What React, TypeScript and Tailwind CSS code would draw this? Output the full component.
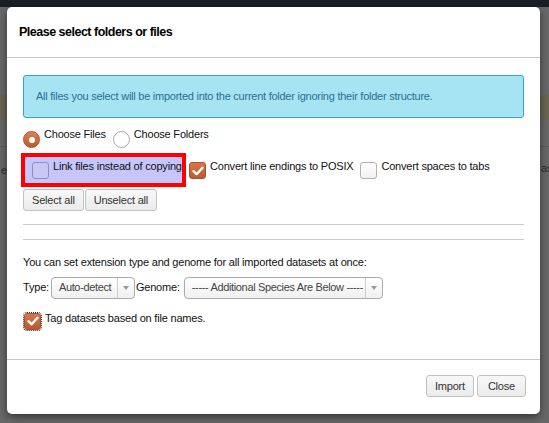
import { FunctionComponent, ReactNode } from "react";

const Check = () => (
  <svg width="12" height="10" viewBox="0 0 12 10">
    <path d="M1.5 5.2 L4.6 8.2 L10.5 1.8" fill="none" stroke="#fff" strokeWidth="2.4" strokeLinecap="round" strokeLinejoin="round" />
  </svg>
);

const Box: FunctionComponent<{ checked?: boolean; tinted?: boolean; dotted?: boolean }> = ({ checked, tinted, dotted }) =>
  checked ? (
    <span
      className={
        "flex shrink-0 items-center justify-center w-[17px] h-[17px] rounded-[3px] border border-[#a8532d] bg-gradient-to-b from-[#d9774b] to-[#b85a32] " +
        (dotted ? "outline outline-1 outline-dotted outline-[#333]" : "")
      }
    >
      <Check />
    </span>
  ) : (
    <span
      className={
        "block shrink-0 w-[17px] h-[17px] rounded-[3px] border " +
        (tinted ? "border-[#8f8fb8] bg-[#c8c8f6]" : "border-[#b3b3b3] bg-gradient-to-b from-white to-[#f1f1f1]")
      }
    />
  );

const Radio: FunctionComponent<{ checked?: boolean }> = ({ checked }) =>
  checked ? (
    <span className="flex shrink-0 items-center justify-center w-[17px] h-[17px] rounded-full border border-[#a8532d] bg-gradient-to-b from-[#e0814f] to-[#b85a32]">
      <span className="block w-[6px] h-[6px] rounded-full bg-white" />
    </span>
  ) : (
    <span className="block shrink-0 w-[17px] h-[17px] rounded-full border border-[#a6a6a6] bg-white" />
  );

const Btn: FunctionComponent<{ children: ReactNode; className?: string }> = ({ children, className }) => (
  <button
    className={
      "h-[22px] rounded-[3px] border border-[#c2c2c2] bg-gradient-to-b from-[#f8f8f8] to-[#ebebeb] text-[11px] tracking-[-0.2px] text-[#333] leading-none " +
      (className || "px-[8px]")
    }
  >
    {children}
  </button>
);

const Select: FunctionComponent<{ label: string; width: string }> = ({ label, width }) => (
  <div className={"flex shrink-0 h-[22px] rounded-[4px] border border-[#aaa] bg-gradient-to-b from-white to-[#f0f0f0] " + width}>
    <div className="flex-1 min-w-0 overflow-hidden flex items-center pl-[7px] text-[11px] tracking-[-0.35px] text-[#444] whitespace-nowrap">{label}</div>
    <div className="w-[17px] shrink-0 border-l border-[#ccc] flex items-center justify-center">
      <span className="block w-0 h-0 border-l-[3px] border-r-[3px] border-t-[4px] border-l-transparent border-r-transparent border-t-[#999]" />
    </div>
  </div>
);

export default function App() {
  return (
    <div className="relative w-[549px] h-[423px] overflow-hidden bg-[#686868] font-['Liberation_Sans',Arial,sans-serif] text-[11px] tracking-[-0.2px] text-[#111]">
      <div className="h-[7px] bg-[#1b1e26]" />
      {/* dimmed page behind */}
      <div className="absolute left-0 top-[95px] w-full h-[25px] bg-[#6b6553]" />
      <div className="absolute left-0 top-[146px] w-full border-t border-[#5c5c5c]" />
      <div className="absolute left-[1px] top-[162px] text-[#2a2a2a]">e</div>
      <div className="absolute left-[541px] top-[160px] text-[#2a2a2a]">as</div>

      <div className="absolute left-[7px] top-[7px] w-[533px] h-[407px] bg-white rounded-[5px] shadow-[0_3px_9px_rgba(0,0,0,0.5)] flex flex-col">
        <div className="h-[51px] flex items-center px-[12px] border-b border-[#c8c8c8]">
          <h4 className="text-[12.5px] tracking-[-0.5px] font-bold text-black">Please select folders or files</h4>
        </div>

        <div className="flex-1 px-[16px] pt-[17px]">
          <div className="h-[43px] flex items-center pl-[12px] rounded-[3px] border border-[#2aa8d0] bg-[#a6e4f3] text-[11px] tracking-[-0.25px] text-[#2c6e8f]">
            All files you select will be imported into the current folder ignoring their folder structure.
          </div>

          <div className="flex items-start mt-[8px]">
            <span className="mt-[5px]"><Radio checked /></span>
            <span className="ml-[4px]">Choose Files</span>
            <span className="mt-[5px] ml-[7px]"><Radio /></span>
            <span className="ml-[4px]">Choose Folders</span>
          </div>

          <div className="flex items-start mt-[5px]">
            <div className="flex items-start w-[165px] h-[34px] -ml-[2px] border-4 border-[#f00] bg-[#c6c6fc] pl-[7px]">
              <span className="mt-[5px]"><Box tinted /></span>
              <span className="ml-[4px] mt-[1px] whitespace-nowrap">Link files instead of copying</span>
            </div>
            <span className="ml-[3px] mt-[9px]"><Box checked /></span>
            <span className="ml-[4px] mt-[5px] whitespace-nowrap">Convert line endings to POSIX</span>
            <span className="ml-[7px] mt-[9px]"><Box /></span>
            <span className="ml-[4px] mt-[5px] whitespace-nowrap">Convert spaces to tabs</span>
          </div>

          <div className="flex gap-[1px] mt-[2px]">
            <Btn>Select all</Btn>
            <Btn>Unselect all</Btn>
          </div>

          <hr className="mt-[13px] border-[#ccc]" />
          <hr className="mt-[14px] border-[#ccc]" />

          <p className="mt-[14px]">You can set extension type and genome for all imported datasets at once:</p>

          <div className="flex items-center mt-[6px]">
            <span className="mr-[2px]">Type:</span>
            <Select label="Auto-detect" width="w-[84px]" />
            <span className="ml-[1px] mr-[4px]">Genome:</span>
            <Select label="----- Additional Species Are Below -----" width="w-[199px]" />
          </div>

          <div className="flex items-start mt-[11px]">
            <span className="mt-[3px] ml-[1px]"><Box checked dotted /></span>
            <span className="ml-[4px]">Tag datasets based on file names.</span>
          </div>
        </div>

        <div className="h-[55px] border-t border-[#c8c8c8] flex justify-end items-start pt-[15px] pr-[14px] gap-[3px]">
          <Btn className="px-[8px]">Import</Btn>
          <Btn className="px-[10px]">Close</Btn>
        </div>
      </div>
    </div>
  );
}
